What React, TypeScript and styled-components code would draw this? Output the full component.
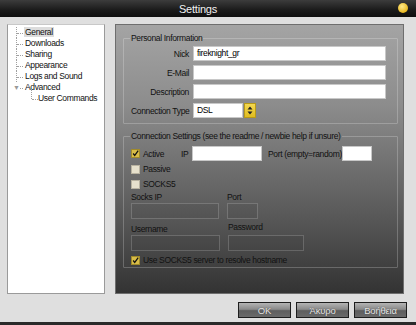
import React from 'react';
import styled, { createGlobalStyle } from 'styled-components';

const GlobalStyle = createGlobalStyle`
  html, body {
    margin: 0;
    padding: 0;
    overflow: hidden;
    background: #dfdfdf;
  }
  * {
    box-sizing: border-box;
  }
`;

const Window = styled.div`
  width: 416px;
  height: 325px;
  display: flex;
  flex-direction: column;
  background: #dfdfdf;
  font-family: 'Liberation Sans', Arial, sans-serif;
  font-size: 8.5px;
  letter-spacing: -0.35px;
  color: #111;
  border-bottom: 3px solid #2a2a2a;
`;

const TitleBar = styled.div`
  height: 17px;
  flex: none;
  display: flex;
  align-items: center;
  justify-content: center;
  position: relative;
  background: linear-gradient(#3c3c3c, #1a1a1a 60%, #0e0e0e);
  color: #f2f2f2;
  font-size: 11px;
  letter-spacing: -0.2px;
  padding-right: 20px;
`;

const MinDot = styled.span`
  position: absolute;
  right: 8px;
  top: 3px;
  width: 10px;
  height: 10px;
  border-radius: 50%;
  background: radial-gradient(circle at 40% 35%, #ffe98a, #e8b820 70%, #b08810);
`;

const Body = styled.div`
  display: flex;
  gap: 10px;
  padding: 7px 0 0 7px;
  height: 277px;
`;

const TreeBox = styled.div`
  width: 98px;
  height: 270px;
  background: #fff;
  border: 1px solid #9a9a9a;
  border-top-color: #c8c8c8;
  padding: 2px 0 0 0;
`;

const TreeRow = styled.div<{ $level: number; $last?: boolean }>`
  position: relative;
  height: 11px;
  line-height: 11px;
  padding-left: ${p => (p.$level === 0 ? 16 : 29)}px;
  white-space: nowrap;
  &::before {
    content: '';
    position: absolute;
    left: ${p => (p.$level === 0 ? 8 : 23)}px;
    top: ${p => (p.$level === 0 ? 0 : -4)}px;
    height: ${p => (p.$last ? (p.$level === 0 ? 6 : 10) : 11)}px;
    border-left: 1px dotted #a0a0a0;
  }
  &::after {
    content: '';
    position: absolute;
    left: ${p => (p.$level === 0 ? 9 : 24)}px;
    top: 6px;
    width: 6px;
    border-top: 1px dotted #a0a0a0;
  }
`;

const Arrow = styled.span`
  position: absolute;
  left: 5px;
  top: 0;
  z-index: 1;
  font-size: 7px;
  color: #999;
  background: #fff;
`;

const TreeLabel = styled.span<{ $selected?: boolean }>`
  padding: 0 1px;
  background: ${p => (p.$selected ? '#dcdcdc' : 'transparent')};
`;

const Panel = styled.div`
  width: 289px;
  height: 270px;
  border: 1px solid #6e6e6e;
  background: linear-gradient(#a4a4a4, #8c8c8c 30%, #5a5a5a 70%, #333 100%);
  padding: 7px 5px 0 7px;
  display: flex;
  flex-direction: column;
  gap: 6px;
`;

const Group = styled.fieldset<{ $height: number }>`
  margin: 0;
  height: ${p => p.$height}px;
  border: 1px solid rgba(255, 255, 255, 0.22);
  border-radius: 1px;
  padding: 0 0 0 7px;
  min-width: 0;
`;

const Legend = styled.legend`
  padding: 0 1px;
  margin-left: -1px;
  line-height: 12px;
  color: #111;
`;

const FormGrid = styled.div`
  display: grid;
  grid-template-columns: 58px 193px;
  column-gap: 4px;
  row-gap: 4px;
  align-items: center;
  margin-top: 2px;
`;

const FieldLabel = styled.label`
  text-align: right;
  white-space: nowrap;
`;

const TextBox = styled.div<{ $w?: number }>`
  width: ${p => (p.$w ? `${p.$w}px` : '100%')};
  flex: none;
  height: 15px;
  background: #fff;
  border: 1px solid #c8c8c8;
  padding: 0 3px;
  line-height: 13px;
  color: #000;
`;

const SelectRow = styled.div`
  display: flex;
  gap: 1px;
  align-items: center;
`;

const Spin = styled.div`
  width: 12px;
  height: 15px;
  background: linear-gradient(#f4d850, #e0bc20);
  border: 1px solid #b89a18;
  display: flex;
  align-items: center;
  justify-content: center;
`;

const Row = styled.div<{ $gap?: number; $mt?: number }>`
  display: flex;
  align-items: flex-start;
  gap: ${p => p.$gap ?? 4}px;
  margin-top: ${p => p.$mt ?? 0}px;
  white-space: nowrap;
`;

const FieldRow = styled(Row)`
  align-items: center;
`;

const Cell = styled.span<{ $w: number }>`
  width: ${p => p.$w}px;
  flex: none;
  display: flex;
  align-items: center;
`;

const CheckWrap = styled.label`
  display: flex;
  align-items: center;
  gap: 3px;
  height: 10px;
  white-space: nowrap;
`;

const Box = styled.span<{ $checked?: boolean }>`
  width: 9px;
  height: 9px;
  flex: none;
  display: flex;
  align-items: center;
  justify-content: center;
  background: ${p => (p.$checked ? '#d8bc48' : '#e6e0cc')};
  border: 1px solid ${p => (p.$checked ? '#a08a2a' : '#b8b2a0')};
`;

const Column = styled.div<{ $w: number }>`
  width: ${p => p.$w}px;
  display: flex;
  flex-direction: column;
`;

const SmallLabel = styled.span<{ $raise?: number }>`
  line-height: 11px;
  position: relative;
  top: ${p => -(p.$raise ?? 0)}px;
`;

const GhostBox = styled.div<{ $w: number }>`
  width: ${p => p.$w}px;
  height: 16px;
  border: 1px solid rgba(255, 255, 255, 0.18);
  background: rgba(0, 0, 0, 0.04);
`;

const Footer = styled.div`
  display: flex;
  justify-content: flex-end;
  gap: 5px;
  padding: 8px 9px 0 0;
`;

const Button = styled.button`
  width: 53px;
  height: 16px;
  padding: 0;
  border: 1px solid #1e1e1e;
  background: linear-gradient(#b4b4b4, #8a8a8a 45%, #5e5e5e 55%, #6a6a6a);
  color: #e8e8e8;
  font-family: 'Liberation Sans', Arial, sans-serif;
  font-size: 9.5px;
  letter-spacing: -0.2px;
  text-shadow: 0 0 1px #333;
`;

const Check = () => (
  <svg width="9" height="9" viewBox="0 0 9 9">
    <path d="M1.5 4.5 L3.5 7 L8 0.8" fill="none" stroke="#111" strokeWidth="1.6" />
  </svg>
);

const CheckBox = ({ checked, label }: { checked?: boolean; label: string }) => (
  <CheckWrap>
    <Box $checked={checked}>{checked && <Check />}</Box>
    {label}
  </CheckWrap>
);

const tree = [
  { label: 'General', level: 0, selected: true },
  { label: 'Downloads', level: 0 },
  { label: 'Sharing', level: 0 },
  { label: 'Appearance', level: 0 },
  { label: 'Logs and Sound', level: 0 },
  { label: 'Advanced', level: 0, last: true, open: true },
  { label: 'User Commands', level: 1, last: true },
];

export default function App() {
  return (
    <>
      <GlobalStyle />
      <Window>
        <TitleBar>
          Settings
          <MinDot />
        </TitleBar>
        <Body>
          <TreeBox>
            {tree.map(t => (
              <TreeRow key={t.label} $level={t.level} $last={t.last}>
                {t.open && <Arrow>▼</Arrow>}
                <TreeLabel $selected={t.selected}>{t.label}</TreeLabel>
              </TreeRow>
            ))}
          </TreeBox>
          <Panel>
            <Group $height={92}>
              <Legend>Personal Information</Legend>
              <FormGrid>
                <FieldLabel>Nick</FieldLabel>
                <TextBox>fireknight_gr</TextBox>
                <FieldLabel>E-Mail</FieldLabel>
                <TextBox />
                <FieldLabel>Description</FieldLabel>
                <TextBox />
                <FieldLabel>Connection Type</FieldLabel>
                <SelectRow>
                  <TextBox $w={50}>DSL</TextBox>
                  <Spin>
                    <svg width="6" height="9" viewBox="0 0 6 9">
                      <path d="M3 0.5 L5.5 3.5 H0.5 Z M3 8.5 L5.5 5.5 H0.5 Z" fill="#222" />
                    </svg>
                  </Spin>
                </SelectRow>
              </FormGrid>
            </Group>
            <Group $height={138}>
              <Legend>Connection Settings (see the readme / newbie help if unsure)</Legend>
              <FieldRow $gap={0} $mt={4}>
                <Cell $w={50}>
                  <CheckBox checked label="Active" />
                </Cell>
                <Cell $w={11}>IP</Cell>
                <TextBox $w={70} />
                <Cell $w={74} style={{ marginLeft: 6 }}>Port (empty=random)</Cell>
                <TextBox $w={30} />
              </FieldRow>
              <Row $mt={3}>
                <CheckBox label="Passive" />
              </Row>
              <Row $mt={5}>
                <CheckBox label="SOCKS5" />
              </Row>
              <Row $gap={8} $mt={3}>
                <Column $w={88}>
                  <SmallLabel>Socks IP</SmallLabel>
                  <GhostBox $w={88} />
                </Column>
                <Column $w={31}>
                  <SmallLabel>Port</SmallLabel>
                  <GhostBox $w={31} />
                </Column>
              </Row>
              <Row $gap={8} $mt={5}>
                <Column $w={89}>
                  <SmallLabel>Username</SmallLabel>
                  <GhostBox $w={89} />
                </Column>
                <Column $w={76}>
                  <SmallLabel $raise={2}>Password</SmallLabel>
                  <GhostBox $w={76} />
                </Column>
              </Row>
              <Row $mt={4}>
                <CheckBox checked label="Use SOCKS5 server to resolve hostname" />
              </Row>
            </Group>
          </Panel>
        </Body>
        <Footer>
          <Button>OK</Button>
          <Button>Άκυρο</Button>
          <Button>Βοήθεια</Button>
        </Footer>
      </Window>
    </>
  );
}
